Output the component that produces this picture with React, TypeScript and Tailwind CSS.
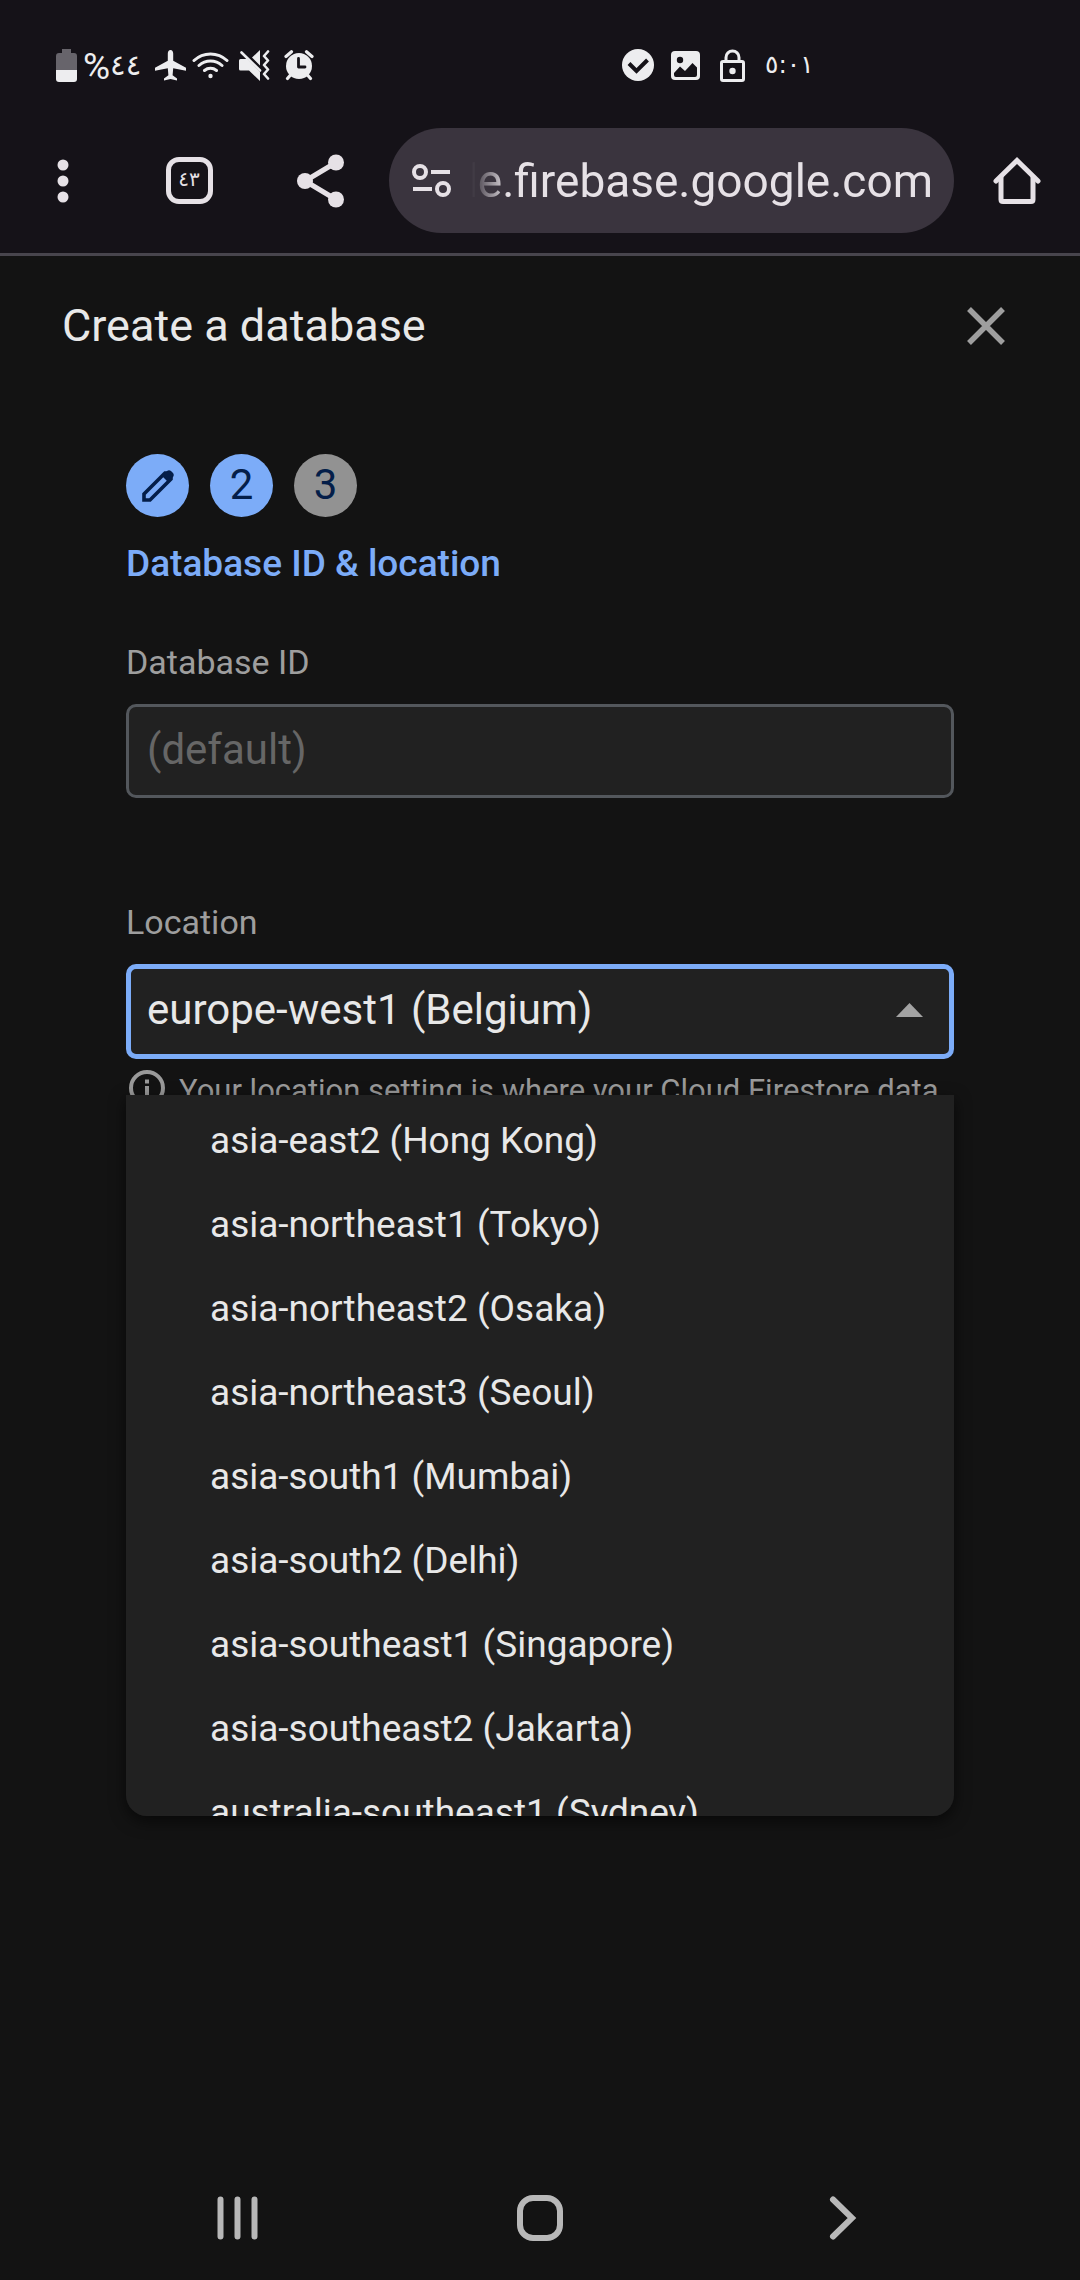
import { useState } from "react";

const LOCATIONS = [
  "asia-east2 (Hong Kong)",
  "asia-northeast1 (Tokyo)",
  "asia-northeast2 (Osaka)",
  "asia-northeast3 (Seoul)",
  "asia-south1 (Mumbai)",
  "asia-south2 (Delhi)",
  "asia-southeast1 (Singapore)",
  "asia-southeast2 (Jakarta)",
  "australia-southeast1 (Sydney)",
  "europe-west1 (Belgium)",
];

function StatusBar() {
  return (
    <div className="flex h-32 items-center justify-between pt-0.5 pr-[271px] pl-14 text-[#ededef]">
      <div className="flex items-center">
        <svg width="21" height="33" viewBox="0 0 21 33" aria-label="Battery">
          <path d="M6 0h9v4h3a3 3 0 0 1 3 3v14H0V7a3 3 0 0 1 3-3h3z" fill="#67646b" />
          <path d="M0 21h21v9a3 3 0 0 1-3 3H3a3 3 0 0 1-3-3z" fill="currentColor" />
        </svg>
        <span className="ml-1.5 flex w-[62px] items-center leading-10">
          <span className="pt-1 font-[Roboto] text-[37px]">%</span>
          <span className="font-['DejaVu_Sans'] text-[29px]">٤٤</span>
        </span>
        <svg className="ml-2.5" width="31" height="31" viewBox="0 0 31 31" fill="currentColor" aria-label="Airplane mode">
          <path d="M15.500 0c1.700 0 2.700 1.700 2.700 3.500v7.200L31 17.800v3l-12.800-2.600-.6 7 4.400 3.300V30.500L15.500 29 9 30.500v-2l4.400-3.300-.6-7L0 20.800v-3l12.800-7.100V3.500C12.800 1.700 13.800 0 15.500 0z" />
        </svg>
        <svg className="ml-1.5" width="37" height="28" viewBox="0 0 37 28" fill="none" stroke="currentColor" strokeWidth="3" strokeLinecap="round" aria-label="Wi-Fi">
          <path d="M2 9.500a24 24 0 0 1 33 0M7 14.500a17 17 0 0 1 23 0M12.500 19.500a9.500 9.500 0 0 1 12 0" />
          <circle cx="18.500" cy="25" r="2.200" fill="currentColor" stroke="none" />
        </svg>
        <svg className="ml-2.5" width="31" height="31" viewBox="0 0 31 31" aria-label="Vibrate">
          <path d="M0 10.500Q0 9 1.500 9H8L21 22v9L10 20.500H1.500Q0 20.500 0 19zM21 0v15.500L13 7.500z" fill="currentColor" />
          <path d="M2.500 2.500 21 20.500" stroke="currentColor" strokeWidth="2.600" strokeLinecap="round" />
          <path d="m29 1.500-4 4.500 4 4.500-4 4.500 4 4.500-4 4.500 4 4.500" fill="none" stroke="currentColor" strokeWidth="2.600" strokeLinecap="round" strokeLinejoin="round" />
        </svg>
        <svg className="ml-3.5" width="30" height="31" viewBox="0 0 30 31" fill="none" stroke="currentColor" aria-label="Alarm">
          <path d="M2 6.500 7.500 1.800M28 6.500l-5.500-4.700M6.500 25 3.500 28.500M23.500 25l3 3.500" strokeWidth="3.200" strokeLinecap="round" />
          <circle cx="15" cy="16" r="13" fill="currentColor" stroke="none" />
          <path d="M14.500 8.500v8.500h6.500" stroke="#151218" strokeWidth="2.800" strokeLinecap="round" strokeLinejoin="round" />
        </svg>
      </div>
      <div className="flex items-center">
        <svg width="32" height="32" viewBox="0 0 32 32" aria-label="Done">
          <circle cx="16" cy="16" r="16" fill="currentColor" />
          <path d="m7 14.500 7.500 7.500L25.500 11" fill="none" stroke="#151218" strokeWidth="4" />
        </svg>
        <svg className="ml-[17px]" width="29" height="29" viewBox="0 0 29 29" aria-label="Picture">
          <rect width="29" height="29" rx="4" fill="currentColor" />
          <circle cx="9" cy="9" r="3.200" fill="#151218" />
          <path d="M3 22l6-6.500 5 4.500 7.500-8 4.500 4.500V24a2 2 0 0 1-2 2H5a2 2 0 0 1-2-2z" fill="#151218" />
        </svg>
        <svg className="ml-5" width="25" height="33" viewBox="0 0 25 33" fill="none" stroke="currentColor" strokeWidth="3" aria-label="Locked">
          <rect x="1.500" y="12.500" width="22" height="19" rx="1.500" />
          <path d="M6 12V8.500a6.500 6.500 0 0 1 13 0V12" />
          <circle cx="12.500" cy="22" r="3.200" fill="currentColor" stroke="none" />
        </svg>
        <span className="ml-5 w-[44px] font-['DejaVu_Sans'] text-[25px] leading-10 whitespace-nowrap">٥:٠١</span>
      </div>
    </div>
  );
}

function BrowserBar() {
  return (
    <div className="flex items-center border-b-3 border-[#48454d] pb-5 text-[#e6e1e6]">
      <button aria-label="Menu" className="flex w-[126px] justify-center">
        <svg width="12" height="44" viewBox="0 0 12 44" fill="currentColor">
          <circle cx="6" cy="6" r="5.500" />
          <circle cx="6" cy="22" r="5.500" />
          <circle cx="6" cy="38" r="5.500" />
        </svg>
      </button>
      <button aria-label="Tabs" className="flex w-[126px] justify-center">
        <span className="flex size-[47px] items-center justify-center rounded-[13px] border-5 border-current pb-1 font-['DejaVu_Sans'] text-[20px] leading-none">
          ٤٣
        </span>
      </button>
      <button aria-label="Share" className="flex w-[137px] justify-center">
        <svg width="47" height="54" viewBox="0 0 47 54" fill="currentColor">
          <path d="M39 8.500 8 27l31 18.500" fill="none" stroke="currentColor" strokeWidth="5" />
          <circle cx="39" cy="8.500" r="8" />
          <circle cx="8" cy="27" r="8" />
          <circle cx="39" cy="45.500" r="8" />
        </svg>
      </button>
      <div className="flex h-[105px] min-w-0 flex-1 items-center rounded-full bg-[#3a343e] pr-[21px] pl-[23px]">
        <svg className="shrink-0" width="40" height="34" viewBox="0 0 40 34" fill="none" stroke="currentColor" strokeWidth="4" aria-label="Site settings">
          <circle cx="8" cy="8" r="6" />
          <circle cx="31" cy="25" r="6" />
          <path d="M19 8h19M1 25h19" />
        </svg>
        <input
          aria-label="Address"
          dir="rtl"
          readOnly
          value="console.firebase.google.com"
          className="ml-5 w-0 min-w-0 flex-1 bg-transparent mask-[linear-gradient(to_right,transparent,black_36px)] font-[Roboto] text-[46px] leading-[60px] outline-none"
        />
      </div>
      <button aria-label="Home" className="flex w-[126px] justify-center">
        <svg width="48" height="48" viewBox="0 0 48 48" fill="none" stroke="currentColor" strokeWidth="5" strokeLinecap="round">
          <path d="M3 24 24 3.500 45 24" />
          <path d="M8 20v22.500q0 2 2 2h28q2 0 2-2V20" />
        </svg>
      </button>
    </div>
  );
}

function Steps() {
  return (
    <ol className="flex gap-[21px] text-[42px] leading-[62px] text-[#041e49]">
      <li className="flex size-[63px] items-center justify-center rounded-full bg-[#7cacf8]">
        <svg width="32" height="32" viewBox="0 0 32 32" aria-label="Edit step 1">
          <path d="M2 30v-6L23 3h1l5 5v1L8 30z" fill="none" stroke="currentColor" strokeWidth="3.600" />
          <path d="m20 6 5-5q2-1.500 4 0l2 2q1.500 2 0 4l-5 5z" fill="currentColor" />
        </svg>
      </li>
      <li className="size-[63px] rounded-full bg-[#7cacf8] text-center">2</li>
      <li className="size-[63px] rounded-full bg-[#929292] text-center">3</li>
    </ol>
  );
}

function LocationField() {
  const [value, setValue] = useState("europe-west1 (Belgium)");
  return (
    <div className="relative mt-[104px]">
      <label htmlFor="location" className="block text-[34px] leading-10 text-[#9e9e9e]">
        Location
      </label>
      <div className="relative mt-[22px]">
        <select
          id="location"
          value={value}
          onChange={(e) => setValue(e.target.value)}
          className="block h-[95px] w-full appearance-none rounded-[10px] border-5 border-[#7cacf8] bg-[#212121] pr-20 pb-1 pl-4 text-[42px] text-[#e8e8e8] outline-none"
        >
          {LOCATIONS.map((name) => (
            <option key={name}>{name}</option>
          ))}
        </select>
        <svg className="pointer-events-none absolute top-[39px] right-[31px]" width="27" height="14" viewBox="0 0 27 14">
          <path d="M13.500 0 27 14H0z" fill="#a3a3a3" />
        </svg>
      </div>
      <p className="mt-[11px] flex items-start gap-3.5 text-[31px] leading-[42px] text-[#9a9a9a]">
        <svg className="ml-[3px] shrink-0" width="36" height="36" viewBox="0 0 36 36" fill="none" stroke="currentColor" strokeWidth="4" aria-hidden="true">
          <circle cx="18" cy="18" r="16" />
          <path d="M18 16v11M18 9.500v4" />
        </svg>
        <span>Your location setting is where your Cloud Firestore data</span>
      </p>
      <ul
        role="listbox"
        aria-label="Locations"
        className="absolute inset-x-0 top-[193px] h-[721px] overflow-y-auto rounded-b-[21px] bg-[#212121] pt-1 shadow-[0_5px_16px_rgba(0,0,0,0.6)] [scrollbar-width:none]"
      >
        {LOCATIONS.map((name) => (
          <li key={name} role="option" aria-selected={name === value}>
            <button
              onClick={() => setValue(name)}
              className="block w-full pl-21 text-left text-[37px] leading-[84px] whitespace-nowrap text-[#e8e8e8]"
            >
              {name}
            </button>
          </li>
        ))}
      </ul>
    </div>
  );
}

function NavigationBar() {
  return (
    <nav className="flex items-center justify-between px-[212px] pb-[38px] text-[#b8b8b8]">
      <button aria-label="Recent apps">
        <svg width="50" height="48" viewBox="0 0 50 48" stroke="currentColor" strokeWidth="6" strokeLinecap="round">
          <path d="M8.500 5.500v37M25.500 5.500v37M42.500 5.500v37" />
        </svg>
      </button>
      <button aria-label="Home screen">
        <svg width="48" height="48" viewBox="0 0 48 48" fill="none" stroke="currentColor" strokeWidth="6">
          <rect x="4" y="4" width="40" height="40" rx="13" />
        </svg>
      </button>
      <button aria-label="Back">
        <svg width="50" height="48" viewBox="0 0 50 48" fill="none" stroke="currentColor" strokeWidth="6" strokeLinecap="round">
          <path d="m15 5.500 19 18.500-19 18.500" />
        </svg>
      </button>
    </nav>
  );
}

export default function App() {
  return (
    <div className="flex min-h-screen flex-col bg-[#131313] font-[Roboto,sans-serif]">
      <header className="bg-[#151218]">
        <StatusBar />
        <BrowserBar />
      </header>
      <main className="flex-1">
        <div className="flex items-center justify-between pt-10 pr-[73px] pl-[62px]">
          <h1 className="text-[45px] leading-[60px] text-[#e8e8e8]">Create a database</h1>
          <button aria-label="Close">
            <svg width="42" height="42" viewBox="0 0 42 42" stroke="#9e9e9e" strokeWidth="5.500">
              <path d="m4 4 34 34M38 4 4 38" />
            </svg>
          </button>
        </div>
        <section className="px-[126px] pt-[98px]">
          <Steps />
          <h2 className="mt-[23px] text-[37px] leading-12 font-medium text-[#7cacf8]">Database ID &amp; location</h2>
          <label htmlFor="database-id" className="mt-[54px] block text-[34px] leading-10 text-[#9e9e9e]">
            Database ID
          </label>
          <input
            id="database-id"
            placeholder="(default)"
            className="mt-[22px] block h-[94px] w-full rounded-[10px] border-3 border-[#53575c] bg-[#212121] pb-1 pl-4.5 text-[42px] text-[#e8e8e8] outline-none placeholder:text-[#666666]"
          />
          <LocationField />
        </section>
      </main>
      <NavigationBar />
    </div>
  );
}
